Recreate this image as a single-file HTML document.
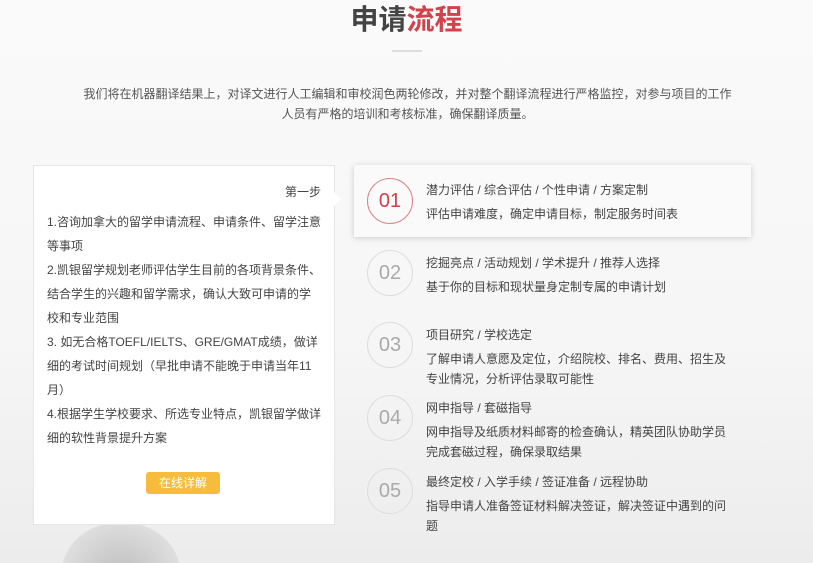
<!DOCTYPE html><html style="overflow:hidden;height:563px"><head><meta charset="utf-8"><style>
body{margin:0;width:813px;height:563px;overflow:hidden;font-family:"Liberation Sans","Noto Sans CJK SC",sans-serif;background:linear-gradient(#fafafa 0%,#f6f6f6 60%,#ececec 100%);position:relative;color:#444}
.a{position:absolute}
h1{position:absolute;top:0;left:0;width:813px;text-align:center;margin:0;font-size:28px;line-height:40px;color:#444;font-weight:bold}
h1 span{color:#d2424c}
.line{left:392px;top:50px;width:30px;height:2px;background:#ddd}
.intro{top:84px;left:80px;width:655px;text-align:center;font-size:12px;line-height:20px;color:#555}
.card{left:33px;top:165px;width:300px;height:358px;background:#fff;border:1px solid #e6e6e6}
.card .t{font-size:12px;line-height:24px;color:#444;white-space:nowrap}
.arrow{left:333px;top:191px;width:0;height:0;border-top:8px solid transparent;border-bottom:8px solid transparent;border-left:8px solid #fff}
.btn{left:146px;top:472px;width:74px;height:22px;background:#f6bd3c;border-radius:3px;color:#fff;font-size:12px;line-height:22px;text-align:center}
.box{left:354px;top:165px;width:397px;height:72px;background:#fafafa;box-shadow:0 1px 6px rgba(0,0,0,.18)}
.c{width:44px;height:44px;border:1px solid #ddd;border-radius:50%;text-align:center;line-height:44px;font-size:20px;color:#aaa;left:367px}
.tx{left:426px;font-size:12px;line-height:24px;color:#444;width:302px}
.tx span{display:block;line-height:20px;margin-top:2px}
.blob{left:62px;top:522px;width:118px;height:41px;overflow:hidden}
.blob div{width:118px;height:100px;border-radius:50%;background:radial-gradient(circle at 50% 60%,#bbb,#ddd 70%,#eee)}
</style></head><body>
<h1>申请<span>流程</span></h1>
<div class="a line"></div>
<div class="a intro">我们将在机器翻译结果上，对译文进行人工编辑和审校润色两轮修改，并对整个翻译流程进行严格监控，对参与项目的工作人员有严格的培训和考核标准，确保翻译质量。</div>
<div class="a blob"><div></div></div>
<div class="a card">
<div class="a t" style="right:13px;top:14px">第一步</div>
<div class="a t" style="left:13px;top:44px">1.咨询加拿大的留学申请流程、申请条件、留学注意<br>等事项<br>2.凯银留学规划老师评估学生目前的各项背景条件、<br>结合学生的兴趣和留学需求，确认大致可申请的学<br>校和专业范围<br>3. 如无合格TOEFL/IELTS、GRE/GMAT成绩，做详<br>细的考试时间规划（早批申请不能晚于申请当年11<br>月）<br>4.根据学生学校要求、所选专业特点，凯银留学做详<br>细的软性背景提升方案</div>
</div>
<div class="a arrow"></div>
<div class="a btn">在线详解</div>
<div class="a box"></div>
<div class="a c" style="top:178px;border-color:#d9828a;color:#c9434e">01</div>
<div class="a c" style="top:250px">02</div>
<div class="a c" style="top:322px">03</div>
<div class="a c" style="top:395px">04</div>
<div class="a c" style="top:468px">05</div>
<div class="a tx" style="top:178px">潜力评估 / 综合评估 / 个性申请 / 方案定制<span>评估申请难度，确定申请目标，制定服务时间表</span></div>
<div class="a tx" style="top:251px">挖掘亮点 / 活动规划 / 学术提升 / 推荐人选择<span>基于你的目标和现状量身定制专属的申请计划</span></div>
<div class="a tx" style="top:323px">项目研究 / 学校选定<span>了解申请人意愿及定位，介绍院校、排名、费用、招生及专业情况，分析评估录取可能性</span></div>
<div class="a tx" style="top:396px">网申指导 / 套磁指导<span>网申指导及纸质材料邮寄的检查确认，精英团队协助学员完成套磁过程，确保录取结果</span></div>
<div class="a tx" style="top:470px">最终定校 / 入学手续 / 签证准备 / 远程协助<span>指导申请人准备签证材料解决签证，解决签证中遇到的问题</span></div>
</body></html>
